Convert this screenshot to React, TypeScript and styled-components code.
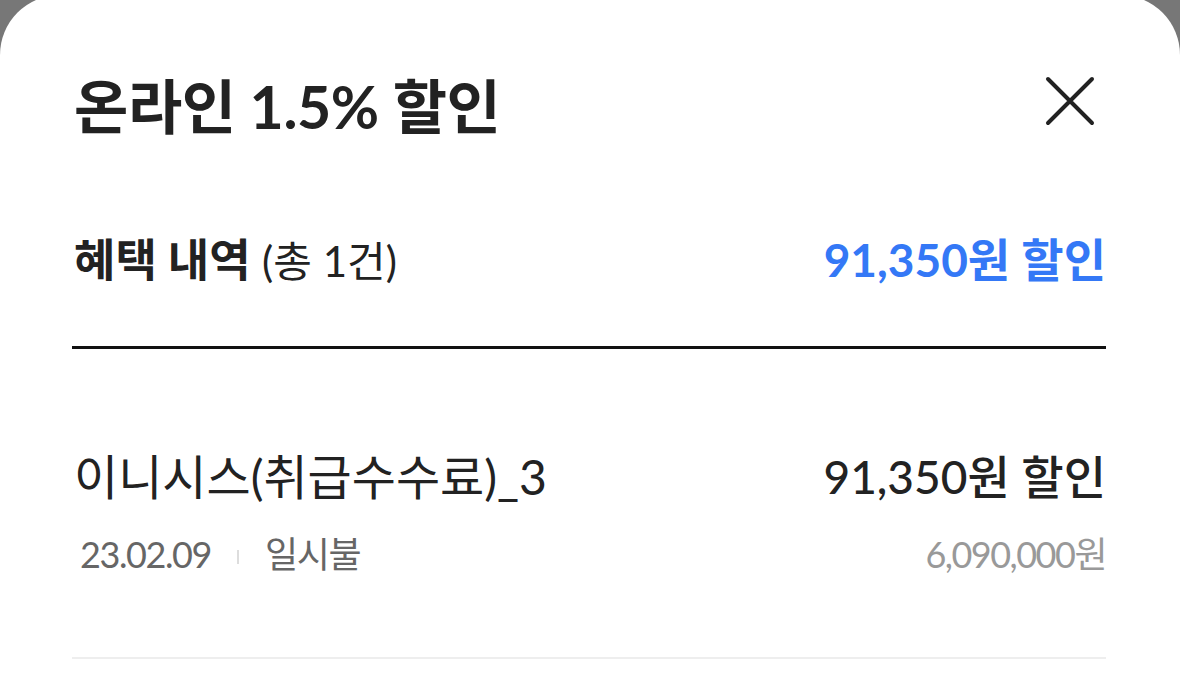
import styled, { createGlobalStyle } from 'styled-components';

const GlobalStyle = createGlobalStyle`
  * {
    box-sizing: border-box;
  }

  body {
    margin: 0;
    background: #777777;
    font-family: 'Lato', 'Noto Sans CJK KR', sans-serif;
    color: #222222;
    overflow: hidden;
  }
`;

type Benefit = {
  id: number;
  name: string;
  date: string;
  payType: string;
  discount: number;
  amount: number;
};

const benefits: Benefit[] = [
  {
    id: 1,
    name: '이니시스(취급수수료)_3',
    date: '23.02.09',
    payType: '일시불',
    discount: 91350,
    amount: 6090000,
  },
];

const won = (value: number) => `${value.toLocaleString('en-US')}원`;

function CloseIcon() {
  return (
    <svg width="52" height="52" viewBox="0 0 52 52" fill="none">
      <path d="M4 4L48 48M48 4L4 48" stroke="#222222" strokeWidth="4" strokeLinecap="round" />
    </svg>
  );
}

function App() {
  const total = benefits.reduce((sum, item) => sum + item.discount, 0);

  return (
    <>
      <GlobalStyle />
      <Page>
        <Sheet>
          <Header>
            <Title>온라인 1.5% 할인</Title>
            <CloseButton type="button" aria-label="닫기">
              <CloseIcon />
            </CloseButton>
          </Header>

          <Summary>
            <SummaryLabel>
              <strong>혜택 내역</strong> <Count>(총 {benefits.length}건)</Count>
            </SummaryLabel>
            <SummaryTotal>{won(total)} 할인</SummaryTotal>
          </Summary>

          <List>
            {benefits.map((item) => (
              <Item key={item.id}>
                <ItemRow>
                  <ItemName>{item.name}</ItemName>
                  <ItemDiscount>{won(item.discount)} 할인</ItemDiscount>
                </ItemRow>
                <ItemRow>
                  <Meta>
                    <span>{item.date}</span>
                    <Divider />
                    <span>{item.payType}</span>
                  </Meta>
                  <Amount>{won(item.amount)}</Amount>
                </ItemRow>
              </Item>
            ))}
          </List>
        </Sheet>
      </Page>
    </>
  );
}

export default App;

const Page = styled.div`
  min-height: 100vh;
  overflow: hidden;
`;

const Sheet = styled.div`
  margin-top: -5px;
  min-height: calc(100vh + 5px);
  padding: 0 74px 0 72px;
  background: #ffffff;
  border-radius: 60px 60px 0 0;
`;

const Header = styled.div`
  display: flex;
  justify-content: space-between;
  align-items: center;
  height: 224px;
  padding-left: 2px;
`;

const Title = styled.h1`
  margin: 0;
  font-size: 59px;
  font-weight: 700;
  line-height: 70px;
  letter-spacing: -0.4px;
  color: #222222;
`;

const CloseButton = styled.button`
  display: flex;
  align-items: center;
  justify-content: center;
  margin: 0 10px 12px 0;
  padding: 0;
  border: none;
  background: none;
  cursor: pointer;
`;

const Summary = styled.div`
  display: flex;
  justify-content: space-between;
  align-items: center;
  height: 82px;
  margin-bottom: 45px;
  padding-left: 2px;
`;

const SummaryLabel = styled.div`
  font-size: 45px;
  line-height: 56px;
  color: #222222;

  strong {
    font-weight: 700;
  }
`;

const Count = styled.span`
  font-weight: 400;
  font-size: 42px;
`;

const SummaryTotal = styled.div`
  font-size: 46px;
  font-weight: 700;
  line-height: 56px;
  color: #3478f6;
`;

const List = styled.div`
  border-top: 3px solid #111111;
`;

const Item = styled.div`
  display: flex;
  flex-direction: column;
  gap: 25px;
  padding: 98px 0 81px 2px;
  border-bottom: 2px solid #eeeeee;
`;

const ItemRow = styled.div`
  display: flex;
  justify-content: space-between;
  align-items: center;
`;

const ItemName = styled.div`
  font-size: 48px;
  line-height: 60px;
  color: #222222;
`;

const ItemDiscount = styled.div`
  font-size: 46px;
  font-weight: 500;
  line-height: 60px;
  color: #222222;
`;

const Meta = styled.div`
  display: flex;
  align-items: center;
  gap: 26px;
  padding-left: 6px;
  font-size: 36px;
  line-height: 44px;
  letter-spacing: -1.4px;
  color: #666666;
`;

const Divider = styled.i`
  display: block;
  width: 2px;
  height: 14px;
  margin-top: 6px;
  background: #dddddd;
`;

const Amount = styled.div`
  font-size: 36px;
  line-height: 44px;
  letter-spacing: -1.5px;
  color: #999999;
`;
